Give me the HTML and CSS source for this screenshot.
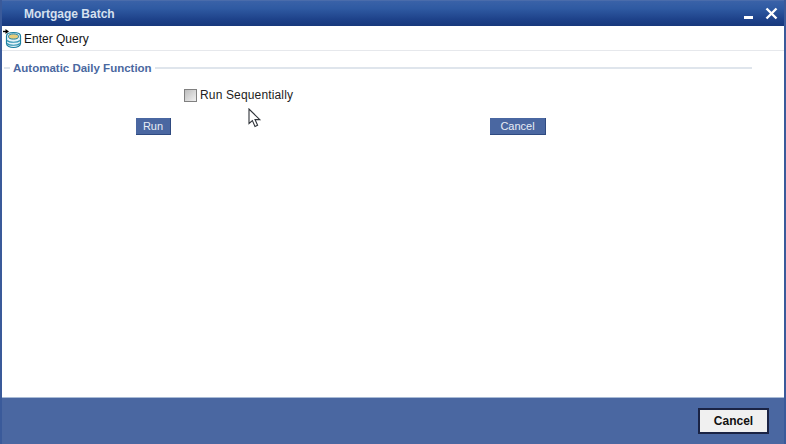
FILE: index.html
```html
<!DOCTYPE html>
<html lang="en">
  <head>
    <meta charset="UTF-8" />
    <meta name="viewport" content="width=device-width, initial-scale=1.0" />
    <title>Mortgage Batch</title>
    <link rel="stylesheet" href="styles.css">
  </head>
  <body>
    <div class="window">
      <div class="title-bar">
        <span class="title">Mortgage Batch</span>
        <div class="window-controls">
          <span class="minimize"></span>
          <svg class="close" width="13" height="13" viewBox="0 0 13 13">
            <path d="M1.5 1.5 L11.5 11.5 M11.5 1.5 L1.5 11.5" stroke="#fff" stroke-width="2.4" fill="none" />
          </svg>
        </div>
      </div>
      <div class="toolbar">
        <svg class="query-icon" width="20" height="20" viewBox="0 0 20 20">
          <path d="M3.5 7 C3.5 4.5 7 3.5 10.5 3.5 C14 3.5 17.5 4.5 17.5 7 V14.5 C17.5 17 14 18.5 10.5 18.5 C7 18.5 3.5 17 3.5 14.5 Z" fill="#e4f3f8" stroke="#1b7fa0" stroke-width="1.2" />
          <ellipse cx="10.5" cy="7.5" rx="5" ry="2.6" fill="#e6cc7c" stroke="#1b7fa0" stroke-width="1" />
          <path d="M4 11.5 C6.5 13.8 14.5 13.8 17 11.5 M4 14.5 C6.5 16.8 14.5 16.8 17 14.5" fill="none" stroke="#2f93b3" stroke-width="1.2" />
          <path d="M0 2.5 H3" stroke="#000" stroke-width="1.4" fill="none" />
          <path d="M2.5 0 L6 2.5 L2.5 5 Z" fill="#000" />
        </svg>
        <span class="toolbar-label">Enter Query</span>
      </div>
      <div class="content">
        <div class="section-head">
          <span class="rule rule-short"></span>
          <span class="section-title">Automatic Daily Function</span>
          <span class="rule rule-long"></span>
        </div>
        <label class="check-row">
          <input type="checkbox" />
          <span>Run Sequentially</span>
        </label>
        <div class="actions">
          <button type="button" class="btn btn-run">Run</button>
          <button type="button" class="btn btn-cancel">Cancel</button>
        </div>
        <svg class="pointer" width="14" height="20" viewBox="0 0 14 20">
          <path d="M1 1 V15.5 L4.4 12.6 L7 18.5 L9.6 17.3 L7 11.6 L11.8 11.6 Z" fill="#fff" stroke="#30343a" stroke-width="1.1" />
        </svg>
      </div>
      <div class="footer">
        <button type="button" class="footer-btn">Cancel</button>
      </div>
    </div>
  </body>
</html>
```

FILE: styles.css
```css
html, body {
  margin: 0;
  padding: 0;
}
body {
  font-family: "Liberation Sans", Arial, sans-serif;
  background-color: #fff;
}
.window {
  width: 786px;
  height: 444px;
  box-sizing: border-box;
  display: flex;
  flex-direction: column;
  border-left: 2px solid #3a5a9a;
  border-right: 2px solid #3a5a9a;
}
.title-bar {
  height: 26px;
  flex: none;
  display: flex;
  align-items: center;
  justify-content: space-between;
  padding: 0 6px 0 22px;
  background: linear-gradient(to bottom, #3a62a8 0%, #2f5aa2 30%, #1d4189 75%, #17387c 100%);
  border-top: 1px solid #4a6cab;
  box-sizing: border-box;
}
.title {
  color: #d5e0ef;
  font-size: 12px;
  font-weight: bold;
}
.window-controls {
  display: flex;
  align-items: center;
  gap: 12px;
}
.minimize {
  width: 9px;
  height: 3px;
  margin-top: 8px;
  background-color: #fff;
}
.close {
  display: block;
  margin-bottom: 1px;
}
.toolbar {
  height: 25px;
  flex: none;
  box-sizing: border-box;
  display: flex;
  align-items: center;
  gap: 1px;
  padding: 1px 0 0 1px;
  border-bottom: 1px solid #e6e8ec;
}
.query-icon {
  display: block;
}
.toolbar-label {
  font-size: 12px;
  color: #111;
}
.content {
  flex: 1;
  position: relative;
  padding-top: 11px;
}
.section-head {
  display: flex;
  align-items: center;
  width: 748px;
  padding-left: 2px;
  gap: 3px;
}
.rule {
  height: 2px;
  background-color: #dfe5ec;
}
.rule-short {
  width: 6px;
}
.rule-long {
  flex: 1;
}
.section-title {
  color: #4a689f;
  font-size: 11.5px;
  font-weight: bold;
}
.check-row {
  display: flex;
  align-items: center;
  gap: 3px;
  margin: 14px 0 0 182px;
  font-size: 12px;
  letter-spacing: 0.15px;
  color: #222;
}
.check-row input {
  appearance: none;
  width: 13px;
  height: 13px;
  margin: 0;
  border: 1px solid #808080;
  box-sizing: border-box;
  background: linear-gradient(to bottom right, #bdbdbd, #f0f0f0);
}
.actions {
  display: flex;
  margin: 16px 0 0 134px;
}
.btn {
  height: 17px;
  padding: 0;
  background-color: #4a67a1;
  border: none;
  border-right: 1px solid #2f4a80;
  border-bottom: 1px solid #2f4a80;
  color: #e8edf5;
  font-family: "Liberation Sans", Arial, sans-serif;
  font-size: 11px;
}
.btn-run {
  width: 35px;
}
.btn-cancel {
  width: 56px;
  margin-left: 319px;
}
.pointer {
  position: absolute;
  left: 246px;
  top: 57px;
}
.footer {
  height: 47px;
  flex: none;
  box-sizing: border-box;
  display: flex;
  align-items: flex-start;
  justify-content: flex-end;
  padding: 10px 15px 0 0;
  background-color: #4a67a1;
  border-top: 1px solid #a9bbd6;
}
.footer-btn {
  width: 71px;
  height: 26px;
  padding: 0;
  background-color: #f0f0f0;
  border: 2px solid #1a2344;
  color: #111;
  font-family: "Liberation Sans", Arial, sans-serif;
  font-size: 12px;
  font-weight: bold;
}
```
